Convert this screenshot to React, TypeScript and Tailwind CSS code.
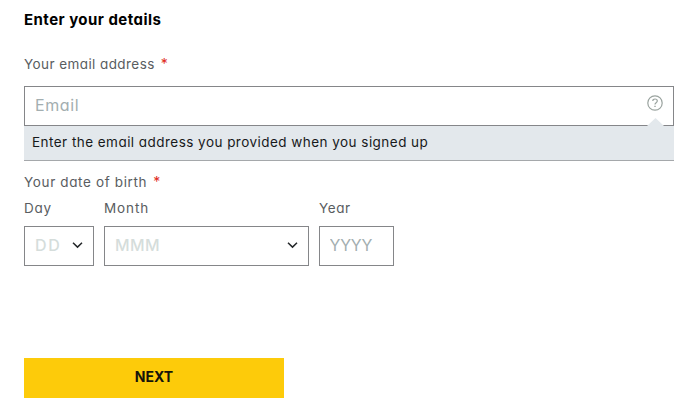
import type { ReactNode } from "react";

interface LabelProps {
  htmlFor: string;
  required?: boolean;
  className?: string;
  children: ReactNode;
}

function Label({ htmlFor, required, className = "", children }: LabelProps) {
  return (
    <label
      htmlFor={htmlFor}
      className={`block whitespace-nowrap text-[13.5px] leading-5 text-[#595d61] ${className}`}
    >
      {children}
      {required && <span className="ml-[6px] text-sm leading-none text-[#e02b20]">*</span>}
    </label>
  );
}

function HelpIcon() {
  return (
    <svg width="16" height="16" viewBox="0 0 16 16" fill="none" stroke="#9aa39f">
      <circle cx="8" cy="8" r="7.2" strokeWidth="1.2" />
      <path d="M5.8 6.1C5.8 4.8 6.7 4 8 4s2.3.8 2.3 2c0 1.7-2.3 1.7-2.3 3.4" strokeWidth="1.2" />
      <path d="M8 10.7v1.4" strokeWidth="1.4" />
    </svg>
  );
}

function Chevron() {
  return (
    <svg width="11" height="7" viewBox="0 0 11 7" fill="none" stroke="#24272a" strokeWidth="1.5">
      <path d="M1 .8l4.5 4.3L10 .8" />
    </svg>
  );
}

interface SelectBoxProps {
  id: string;
  placeholder: string;
  className?: string;
}

function SelectBox({ id, placeholder, className = "" }: SelectBoxProps) {
  return (
    <button
      id={id}
      type="button"
      className={`flex h-10 w-full items-center justify-between border border-[#858689] bg-white pr-[10px] pb-[2px] pl-[10px] text-base font-medium text-[#d5dddb] ${className}`}
    >
      <span>{placeholder}</span>
      <Chevron />
    </button>
  );
}

export default function App() {
  return (
    <form className="h-[410px] overflow-hidden bg-white pt-[10px] pr-[22px] pl-6 font-['Inter',sans-serif] [font-feature-settings:'cv11']">
      <h1 className="text-[15px] leading-5 font-bold tracking-[0.46px] text-black">
        Enter your details
      </h1>

      <Label htmlFor="email" required className="mt-[24px] tracking-[0.42px]">
        Your email address
      </Label>
      <div className="relative mt-3">
        <input
          id="email"
          type="email"
          placeholder="Email"
          className="block h-10 w-full border border-[#858689] px-[10px] pb-[2px] text-base tracking-[0.6px] outline-none placeholder:text-[#a3aeb0]"
        />
        <span className="absolute top-[9px] right-[11px]">
          <HelpIcon />
        </span>
        <svg className="absolute right-[10px] bottom-0" width="17" height="8" viewBox="0 0 17 8">
          <path d="M0 8L8.5 0 17 8z" fill="#e3e8ec" />
        </svg>
      </div>
      <p className="h-[35px] border-b border-[#a5a8ab] bg-[#e3e8ec] px-2 pt-[6px] text-[13.5px] leading-5 tracking-[0.46px] text-[#17191b]">
        Enter the email address you provided when you signed up
      </p>

      <Label htmlFor="day" required className="mt-[11px] tracking-[0.64px]">
        Your date of birth
      </Label>
      <div className="mt-1.5 flex gap-[10px]">
        <div className="w-[70px]">
          <Label htmlFor="day" className="mb-2 tracking-[0.8px]">Day</Label>
          <SelectBox id="day" placeholder="DD" className="tracking-[1.6px]" />
        </div>
        <div className="w-[205px]">
          <Label htmlFor="month" className="mb-2 tracking-[0.9px]">Month</Label>
          <SelectBox id="month" placeholder="MMM" className="tracking-[0.4px]" />
        </div>
        <div className="w-[75px]">
          <Label htmlFor="year" className="mb-2 tracking-[0.6px]">Year</Label>
          <input
            id="year"
            placeholder="YYYY"
            className="block h-10 w-full border border-[#858689] pr-[10px] pb-[2px] pl-[9.5px] text-base tracking-[-0.2px] outline-none placeholder:text-[#a3aeb0]"
          />
        </div>
      </div>

      <button
        type="submit"
        className="mt-[92px] block h-10 w-[260px] bg-[#fdcb0a] pb-[2px] text-sm font-bold text-[#16140a]"
      >
        NEXT
      </button>
    </form>
  );
}
